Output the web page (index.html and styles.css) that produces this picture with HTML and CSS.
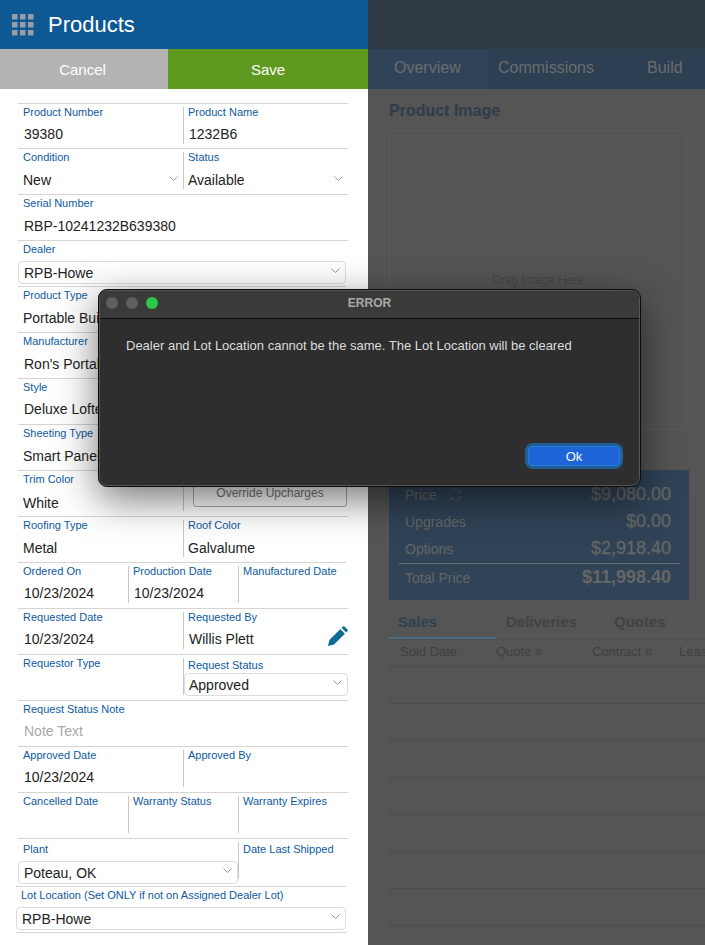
FILE: index.html
```html
<!DOCTYPE html>
<html lang="en">
  <head>
    <meta charset="utf-8" />
    <title>Products</title>
    <link rel="stylesheet" href="styles.css">
  </head>
  <body>
    <svg class="defs" width="0" height="0">
      <symbol id="chevron" viewBox="0 0 9 5">
        <path d="M0.5 0.5 L4.5 4.5 L8.5 0.5" fill="none" stroke="#8a8a8a" stroke-width="0.9" />
      </symbol>
    </svg>

    <div class="app">
      <section class="left">
        <header class="title-bar">
          <svg class="grid-icon" width="22" height="22" viewBox="0 0 22 22">
            <g fill="#9a9ea3">
              <rect x="0" y="0" width="5.5" height="5.5" /><rect x="8" y="0" width="5.5" height="5.5" /><rect x="16" y="0" width="5.5" height="5.5" />
              <rect x="0" y="8" width="5.5" height="5.5" /><rect x="8" y="8" width="5.5" height="5.5" /><rect x="16" y="8" width="5.5" height="5.5" />
              <rect x="0" y="16" width="5.5" height="5.5" /><rect x="8" y="16" width="5.5" height="5.5" /><rect x="16" y="16" width="5.5" height="5.5" />
            </g>
          </svg>
          <h1>Products</h1>
        </header>
        <div class="actions">
          <button class="btn-cancel" type="button">Cancel</button>
          <button class="btn-save" type="button">Save</button>
        </div>

        <form class="form">
          <div class="row cols-2 first">
            <div class="field"><label>Product Number</label><div class="value">39380</div></div>
            <div class="field"><label>Product Name</label><div class="value">1232B6</div></div>
          </div>
          <div class="row cols-2">
            <div class="field">
              <label>Condition</label>
              <div class="value pick"><span>New</span><svg class="chev"><use href="#chevron" /></svg></div>
            </div>
            <div class="field">
              <label>Status</label>
              <div class="value pick"><span>Available</span><svg class="chev"><use href="#chevron" /></svg></div>
            </div>
          </div>
          <div class="row"><div class="field"><label>Serial Number</label><div class="value drop">RBP-10241232B639380</div></div></div>
          <div class="row">
            <div class="field">
              <label>Dealer</label>
              <div class="select wide"><span>RPB-Howe</span><svg class="chev"><use href="#chevron" /></svg></div>
            </div>
          </div>
          <div class="row short"><div class="field"><label>Product Type</label><div class="value pick">Portable Buildings</div></div></div>
          <div class="row"><div class="field"><label>Manufacturer</label><div class="value drop">Ron's Portable Buildings</div></div></div>
          <div class="row"><div class="field"><label>Style</label><div class="value">Deluxe Lofted Barn</div></div></div>
          <div class="row"><div class="field"><label>Sheeting Type</label><div class="value pick">Smart Panel</div></div></div>
          <div class="row cols-2">
            <div class="field"><label>Trim Color</label><div class="value pick drop">White</div></div>
            <div class="field"><button class="override" type="button">Override Upcharges</button></div>
          </div>
          <div class="row cols-2">
            <div class="field"><label>Roofing Type</label><div class="value pick">Metal</div></div>
            <div class="field"><label>Roof Color</label><div class="value pick">Galvalume</div></div>
          </div>
          <div class="row cols-3 short">
            <div class="field"><label>Ordered On</label><div class="value">10/23/2024</div></div>
            <div class="field"><label>Production Date</label><div class="value">10/23/2024</div></div>
            <div class="field"><label>Manufactured Date</label></div>
          </div>
          <div class="row cols-2">
            <div class="field"><label>Requested Date</label><div class="value">10/23/2024</div></div>
            <div class="field">
              <label>Requested By</label>
              <div class="value with-icon">
                <span>Willis Plett</span>
                <svg class="pencil" width="20" height="20" viewBox="0 0 20 20">
                  <path fill="#0f6a94" d="M0 20 L1.4 14 L12.3 3.1 L16.9 7.7 L6 18.6 Z M13.6 1.8 L14.9 0.5 Q15.6 -0.1 16.4 0.5 L19.5 3.6 Q20.1 4.4 19.5 5.1 L18.2 6.4 Z" />
                </svg>
              </div>
            </div>
          </div>
          <div class="row cols-2">
            <div class="field"><label>Requestor Type</label></div>
            <div class="field">
              <label class="low">Request Status</label>
              <div class="select tight"><span>Approved</span><svg class="chev"><use href="#chevron" /></svg></div>
            </div>
          </div>
          <div class="row"><div class="field"><label>Request Status Note</label><div class="value note">Note Text</div></div></div>
          <div class="row cols-2">
            <div class="field"><label>Approved Date</label><div class="value">10/23/2024</div></div>
            <div class="field"><label>Approved By</label></div>
          </div>
          <div class="row cols-3">
            <div class="field"><label>Cancelled Date</label></div>
            <div class="field"><label>Warranty Status</label></div>
            <div class="field"><label>Warranty Expires</label></div>
          </div>
          <div class="row cols-plant tall">
            <div class="field">
              <label class="low">Plant</label>
              <div class="select"><span>Poteau, OK</span><svg class="chev"><use href="#chevron" /></svg></div>
            </div>
            <div class="field"><label class="low">Date Last Shipped</label></div>
          </div>
          <div class="row lot">
            <div class="field">
              <label>Lot Location (Set ONLY if not on Assigned Dealer Lot)</label>
              <div class="select wide"><span>RPB-Howe</span><svg class="chev"><use href="#chevron" /></svg></div>
            </div>
          </div>
        </form>
      </section>

      <section class="right">
        <div class="right-top"></div>
        <nav class="tabs">
          <span class="tab tab-overview">Overview</span>
          <span class="tab tab-commissions">Commissions</span>
          <span class="tab tab-build">Build</span>
        </nav>
        <div class="content">
          <h2>Product Image</h2>
          <div class="image-box">Drag Image Here</div>
          <div class="price">
            <div class="price-row">
              <span class="price-name">Price
                <svg class="refresh" width="15" height="14" viewBox="0 0 15 14">
                  <path d="M2 6 A5.5 5.5 0 0 1 12 4 M13 8 A5.5 5.5 0 0 1 3 10 M12.5 1 V4.5 H9 M2.5 13 V9.5 H6" fill="none" stroke="#555b62" stroke-width="1" />
                </svg>
              </span>
              <span class="price-val">$9,080.00</span>
            </div>
            <div class="price-row"><span class="price-name">Upgrades</span><span class="price-val">$0.00</span></div>
            <div class="price-row"><span class="price-name">Options</span><span class="price-val">$2,918.40</span></div>
            <div class="price-row total"><span class="price-name">Total Price</span><span class="price-val">$11,998.40</span></div>
          </div>
          <div class="sub-tabs">
            <span class="sub-tab active">Sales</span>
            <span class="sub-tab deliveries">Deliveries</span>
            <span class="sub-tab quotes">Quotes</span>
          </div>
          <div class="table">
            <div class="table-head">
              <span class="th-sold">Sold Date</span>
              <span class="th-quote">Quote #</span>
              <span class="th-contract">Contract #</span>
              <span>Lease</span>
            </div>
            <div class="table-row"></div>
            <div class="table-row"></div>
            <div class="table-row"></div>
            <div class="table-row"></div>
            <div class="table-row"></div>
            <div class="table-row"></div>
            <div class="table-row"></div>
            <div class="table-row"></div>
          </div>
        </div>
      </section>
    </div>

    <div class="dialog">
      <div class="dialog-title">
        <div class="lights">
          <span class="light"></span>
          <span class="light"></span>
          <span class="light green"></span>
        </div>
        <span>ERROR</span>
      </div>
      <div class="dialog-body">
        <p>Dealer and Lot Location cannot be the same. The Lot Location will be cleared</p>
        <button class="ok" type="button">Ok</button>
      </div>
    </div>
  </body>
</html>
```

FILE: styles.css
```css
* {
  box-sizing: border-box;
}

html, body {
  margin: 0;
  padding: 0;
  height: 945px;
  overflow: hidden;
  font-family: "Liberation Sans", Arial, sans-serif;
}

.defs {
  display: block;
  height: 0;
}

.app {
  display: flex;
  height: 945px;
}

/* left panel */
.left {
  width: 368px;
  flex: none;
  background: #fff;
}

.title-bar {
  height: 49px;
  background: #0e5894;
  display: flex;
  align-items: center;
  padding-left: 12px;
}

.title-bar h1 {
  margin: 0 0 0 14px;
  color: #fff;
  font-size: 22px;
  font-weight: normal;
}

.actions {
  display: flex;
  height: 40px;
}

.actions button {
  border: 0;
  color: #fff;
  font-family: inherit;
  font-size: 15px;
  padding: 1px 0 0;
}

.btn-cancel {
  width: 168px;
  background: #b3b3b3;
}

.actions .btn-cancel {
  padding-right: 3px;
}

.btn-save {
  flex: 1;
  background: #5e9920;
}

.form {
  padding: 14px 0 0 18px;
}

.row {
  width: 330px;
  height: 46px;
  border-top: 1px solid #d4d4d4;
  padding-top: 3px;
}

.row.first {
  height: 45px;
}

.row.short {
  width: 328px;
}

.row.tall {
  height: 48px;
}

.row.lot {
  width: 330px;
  height: 47px;
  margin-left: -2px;
  border-bottom: 1px solid #d4d4d4;
}

.cols-2 {
  display: grid;
  grid-template-columns: 165px 165px;
}

.cols-3 {
  display: grid;
  grid-template-columns: 110px 110px 110px;
}

.cols-plant {
  display: grid;
  grid-template-columns: 220px 110px;
}

.field {
  height: 37px;
}

.field + .field {
  border-left: 1px solid #c8c8c8;
}

.field label {
  display: block;
  padding-left: 5px;
  font-size: 11px;
  line-height: 10px;
  color: #0e5a9e;
  white-space: nowrap;
}

.field + .field label {
  padding-left: 4px;
}

.field label.low {
  margin-top: 2px;
}

.lot .field label {
  padding-left: 5px;
}

.value {
  margin-top: 9px;
  padding-left: 6px;
  font-size: 14px;
  line-height: 16px;
  color: #222;
  white-space: nowrap;
}

.field + .field .value {
  padding-left: 5px;
}

.value.pick {
  margin-top: 10px;
  padding-left: 5px;
  display: flex;
  justify-content: space-between;
  align-items: center;
}

.value.drop {
  margin-top: 10px;
}

.value.pick.drop {
  margin-top: 11px;
}

.field + .field .value.pick {
  padding-left: 4px;
}

.value.note {
  color: #a8a8a8;
}

.value.with-icon {
  display: flex;
  justify-content: space-between;
}

.pencil {
  margin: -5px 0 0;
  flex: none;
}

.chev {
  width: 9px;
  height: 5px;
  margin: -4px 5px 0 0;
  flex: none;
}

.select {
  display: flex;
  justify-content: space-between;
  align-items: center;
  height: 23px;
  margin-top: 7px;
  padding-left: 5px;
  border: 1px solid #dcdcdc;
  border-radius: 4px;
  background: #fff;
  font-size: 14px;
  color: #222;
}

.select.wide {
  width: 328px;
}

.lot .select.wide {
  width: 330px;
}

.select.tight {
  margin-top: 3px;
  padding-left: 4px;
}

.override {
  display: block;
  width: 154px;
  height: 29px;
  margin: 4px 0 0 9px;
  border: 1px solid #aaa;
  border-radius: 3px;
  background: #fff;
  color: #777;
  font-family: inherit;
  font-size: 12px;
  padding: 0;
}

/* right panel, dimmed behind the dialog */
.right {
  flex: 1;
  background: #555;
  overflow: hidden;
}

.right-top {
  height: 49px;
  background: #2f3a44;
}

.tabs {
  display: flex;
  height: 40px;
  background: #2c3f53;
}

.tab {
  font-size: 16px;
  line-height: 38px;
  color: #6d6d6d;
}

.tab-overview {
  width: 119px;
  padding-left: 26px;
  background: #2f4459;
}

.tab-commissions {
  width: 149px;
  padding-left: 11px;
}

.tab-build {
  padding-left: 11px;
}

.content {
  padding: 13px 0 0 21px;
  width: 337px;
}

.content h2 {
  margin: 0;
  font-size: 16px;
  line-height: 18px;
  color: #2e3c4b;
}

.image-box {
  width: 298px;
  height: 300px;
  margin-top: 10px;
  padding-top: 142px;
  border: 1px solid #5c5c5c;
  border-radius: 2px;
  text-align: center;
  font-size: 12px;
  line-height: 14px;
  color: #454545;
}

.price {
  width: 300px;
  height: 130px;
  margin-top: 40px;
  padding-top: 11px;
  background: #304357;
  color: #666;
}

.price-row {
  display: flex;
  justify-content: space-between;
  align-items: center;
  height: 27px;
  padding: 0 18px 0 16px;
}

.price-name {
  font-size: 14px;
  display: flex;
  align-items: center;
}

.refresh {
  margin-left: 11px;
}

.price-val {
  font-size: 18px;
  -webkit-text-stroke: 0.3px #666;
}

.price-row.total {
  height: 28px;
  margin: 1px 9px 0 10px;
  padding: 0 9px 0 6px;
  border-top: 1px solid #66717c;
}

.total .price-val {
  font-weight: bold;
  -webkit-text-stroke: 0;
}

.sub-tabs {
  display: flex;
  height: 40px;
  width: 317px;
  margin-left: -1px;
  border-bottom: 1px solid #4f4f4f;
  font-size: 15px;
  font-weight: bold;
  line-height: 43px;
  color: #424242;
  white-space: nowrap;
}

.sub-tab {
  height: 39px;
}

.sub-tab.active {
  width: 108px;
  padding-left: 10px;
  color: #2e3f50;
  border-bottom: 2px solid #4a6a80;
}

.sub-tab.deliveries {
  width: 118px;
  padding-left: 10px;
}

.table {
  border-left: 1px solid #4f4f4f;
  width: 316px;
}

.table-head {
  display: flex;
  height: 27px;
  padding-left: 10px;
  border-bottom: 1px solid #4d4d4d;
  font-size: 13px;
  line-height: 24px;
  color: #3f3f3f;
  white-space: nowrap;
}

.table-head span {
  flex: none;
}

.table-head .th-sold,
.table-head .th-quote {
  width: 96px;
}

.table-head .th-contract {
  width: 87px;
}

.table-row {
  height: 37px;
  border-bottom: 1px solid #4d4d4d;
}

/* error dialog */
.dialog {
  position: absolute;
  left: 98px;
  top: 289px;
  width: 543px;
  height: 198px;
  background: #2e2e2e;
  border: 1px solid #0c0c0c;
  border-radius: 9px;
  box-shadow: inset 0 0 0 1px #565656, 0 12px 40px rgba(0, 0, 0, 0.55);
  overflow: hidden;
}

.dialog-title {
  display: flex;
  justify-content: center;
  align-items: center;
  height: 28px;
  margin: 1px 1px 0;
  padding-bottom: 3px;
  background: #3a3a3a;
  border-bottom: 1px solid #0c0c0c;
  border-radius: 8px 8px 0 0;
  font-size: 12px;
  font-weight: bold;
  color: #aaa;
}

.lights {
  position: absolute;
  left: 7px;
  top: 7px;
  display: flex;
  gap: 8px;
}

.light {
  width: 12px;
  height: 12px;
  border-radius: 50%;
  background: #5f5f5f;
}

.light.green {
  background: #2cc84a;
}

.dialog-body {
  display: flex;
  flex-direction: column;
  padding: 19px 20px 0 27px;
}

.dialog-body p {
  margin: 0;
  height: 108px;
  font-size: 13px;
  line-height: 15px;
  color: #dcdcdc;
  white-space: nowrap;
}

.ok {
  align-self: flex-end;
  width: 92px;
  height: 20px;
  padding: 0;
  border: 1px solid #2a7fe0;
  border-radius: 5px;
  background: #1c64d8;
  box-shadow: 0 0 0 3px #1f5f94;
  color: #fff;
  font-family: inherit;
  font-size: 13px;
}
```
